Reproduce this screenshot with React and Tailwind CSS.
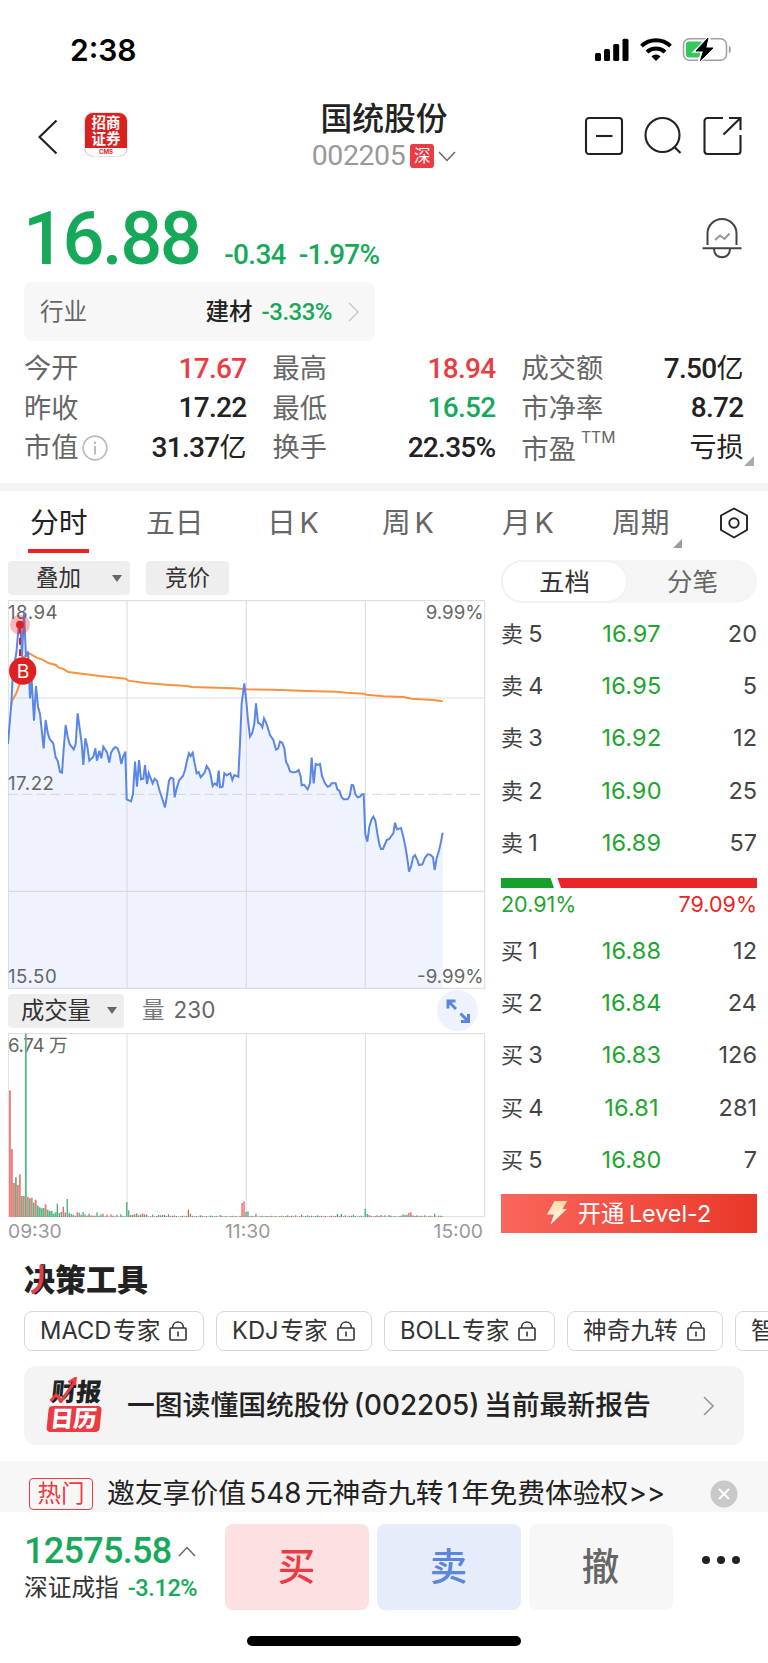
import React, { useState } from 'react';

const stats = [
  { label: '今开', value: '17.67', color: 'text-[#ee3a43]' },
  { label: '最高', value: '18.94', color: 'text-[#ee3a43]' },
  { label: '成交额', value: '7.50', unit: '亿', color: 'text-[#222]' },
  { label: '昨收', value: '17.22', color: 'text-[#222]' },
  { label: '最低', value: '16.52', color: 'text-[#17a95a]' },
  { label: '市净率', value: '8.72', color: 'text-[#222]' },
  { label: '市值', value: '31.37', unit: '亿', color: 'text-[#222]', info: true },
  { label: '换手', value: '22.35%', color: 'text-[#222]' },
  { label: '市盈', unit: '亏损', color: 'text-[#222]', ttm: true },
];

const tabs = [
  { name: '分时', width: 'w-[116px]' },
  { name: '五日', width: 'w-[121px]' },
  { name: '日 K', width: 'w-[115px]' },
  { name: '周 K', width: 'w-[120px]' },
  { name: '月 K', width: 'w-[110px]' },
  { name: '周期', width: 'w-[108px]', corner: true },
];

const sells = [
  ['卖 5', '16.97', '20'],
  ['卖 4', '16.95', '5'],
  ['卖 3', '16.92', '12'],
  ['卖 2', '16.90', '25'],
  ['卖 1', '16.89', '57'],
];

const buys = [
  ['买 1', '16.88', '12'],
  ['买 2', '16.84', '24'],
  ['买 3', '16.83', '126'],
  ['买 4', '16.81', '281'],
  ['买 5', '16.80', '7'],
];

const tools = [
  { name: 'MACD 专家', width: 'w-[180px]' },
  { name: 'KDJ 专家', width: 'w-[156px]' },
  { name: 'BOLL 专家', width: 'w-[171px]' },
  { name: '神奇九转', width: 'w-[156px]' },
  { name: '智能', width: 'w-[156px]' },
];

const pricePoints =
  '24,762 34,640 38,560 50,480 54,430 58,400 62,420 66,500 72,368 78,500 84,485 90,625 95,570 102,692 108,588 114,650 120,672 131,775 137,690 143,728 149,747 160,760 167,802 173,812 180,846 186,848 191,778 197,705 203,740 209,762 221,778 227,762 233,670 239,715 245,760 250,825 256,745 262,770 268,812 280,800 286,775 291,812 298,782 304,805 310,770 321,787 328,818 333,788 340,777 346,771 353,775 358,790 364,822 370,798 376,785 380,928 393,934 399,912 405,815 411,890 417,810 423,868 430,866 435,825 441,882 446,850 458,880 464,866 471,873 478,900 488,930 495,952 501,915 507,872 512,863 520,866 524,922 530,895 538,870 549,858 555,840 561,812 567,790 572,798 578,788 584,820 590,850 596,846 602,862 608,855 614,847 620,828 627,838 632,855 638,888 644,880 651,886 656,842 660,892 668,890 673,850 680,856 691,850 697,870 703,855 715,860 720,760 725,640 733,580 739,635 744,690 750,740 757,728 763,700 768,640 774,698 782,703 787,712 792,685 798,697 804,715 810,735 820,750 828,779 834,776 840,755 847,758 853,775 858,815 864,826 870,844 878,847 888,846 896,840 902,860 905,886 912,884 923,898 930,880 935,803 941,880 947,822 953,825 960,822 966,858 975,880 983,890 990,887 995,880 1007,880 1012,898 1018,902 1024,920 1031,928 1043,928 1049,918 1055,885 1060,886 1066,912 1073,922 1080,920 1086,913 1091,913 1096,1033 1102,1055 1108,1010 1114,990 1120,980 1126,992 1132,1030 1138,1063 1143,1077 1149,1077 1160,1050 1168,1047 1174,1038 1180,1030 1185,998 1191,1018 1203,1014 1210,1040 1218,1080 1224,1120 1227,1145 1233,1130 1239,1102 1245,1095 1252,1110 1257,1125 1267,1123 1275,1103 1283,1093 1291,1094 1299,1102 1304,1140 1310,1105 1318,1078 1323,1055 1328,1028';

const averagePoints =
  '32,655 36,632 48,612 56,590 60,575 72,500 88,490 110,503 128,509 145,519 168,525 175,532 190,537 205,546 245,551 300,558 350,563 377,566 385,572 435,579 500,584 560,588 575,591 700,595 740,598 820,599 920,603 1010,605 1040,608 1092,611 1100,614 1150,619 1210,621 1235,626 1300,630 1328,634';

// 每分钟成交量高度，正数为红，负数为绿
const openVolumes = [
  380, 204, 102, -119, 96, 128, -63, 63, -550, 60, -56, 58, -43, 52, -34, -29, -26, -27, 38, -22, -18, -18, -10,
  -14, -40, -12, -15, 31, 14, -54, -13, -9, -7, 4, 14, -13, -7, -15, 8, -4, -10, 5, 4, 4, -14, -4, -8, 10,
];

const volumeSpikes = {
  49: 7, 51: 8, 54: 6, 56: -8, 59: -45, 60: -20, 61: 6, 62: -7, 63: 8, 64: -11, 65: -5, 66: 8, 67: 10, 68: 8, 69: -7,
  72: -7, 75: -6, 76: -5, 77: -6, 78: 7, 80: 8, 83: 5, 90: 22, 91: -10, 96: -5, 101: -4, 106: -6, 117: 42, 118: 47,
  119: -15, 120: -17, 124: 10, 130: -3, 140: -5, 144: 5, 147: -7, 150: -5, 155: -5, 165: -9, 167: -9, 169: 5, 173: -6,
  179: -25, 180: -9, 181: 6, 185: -5, 187: -6, 189: 5, 191: -6, 198: -8, 199: -6, 200: -7, 201: 12, 202: 14, 203: -5,
  205: -5, 209: 5, 214: -10, 216: 4,
};

const volumes = Array.from({ length: 219 }, (_, i) => {
  if (i < openVolumes.length) return openVolumes[i];
  if (volumeSpikes[i]) return volumeSpikes[i];
  const size = 1 + ((i * 7) % 5) * 0.7;
  return (i * 5) % 9 < 5 ? size : -size;
});

const Chevron = ({ className, d = 'M1 1l9 9-9 9', box = '0 0 11 20', width = 1.6 }) => (
  <svg className={className} viewBox={box} fill="none" stroke="currentColor" strokeWidth={width}>
    <path d={d} />
  </svg>
);

const StatusBar = () => (
  <div className="flex h-[99px] items-center justify-between pl-[70px] pr-9">
    <span className="text-[30px] leading-none font-semibold text-black">2:38</span>
    <svg className="h-[26px] w-[138px]" viewBox="0 0 138 26">
      <rect x="1" y="16" width="6" height="8" rx="1.5" />
      <rect x="10" y="12" width="6" height="12" rx="1.5" />
      <rect x="19.2" y="7" width="6" height="17" rx="1.5" />
      <rect x="28.5" y="1.7" width="6" height="22.3" rx="1.5" />
      <g fill="none" stroke="#000" strokeWidth="4">
        <path d="M47.5 9a21 21 0 0 1 29 0" />
        <path d="M53 15a13 13 0 0 1 18 0" />
      </g>
      <path d="M62 24l-4.5-4.6a6.5 6.5 0 0 1 9 0z" />
      <rect x="89.5" y="1.8" width="43" height="21.5" rx="6" fill="none" stroke="#a0a0a4" strokeWidth="1.5" />
      <path d="M134.8 8.7c2.7.8 2.7 6.8 0 7.6z" fill="#a0a0a4" />
      <rect x="92" y="4.500" width="17" height="16" rx="3" fill="#34c759" />
      <path d="M115.500-.5l-15 15h7.500l-3 10.500L121 10.500h-7.500z" stroke="#fff" strokeWidth="2.500" />
      <path d="M114 1l-12 13h7.500l-3 9.500L119 11h-7.500z" stroke="#000" strokeWidth="1" strokeLinejoin="round" />
    </svg>
  </div>
);

const Header = () => (
  <div className="flex h-[92px] items-start">
    <div className="flex w-[230px] items-center pl-[38px] pt-[13px]">
      <Chevron className="mt-1 h-[36px] w-[20px] text-[#222]" box="0 0 20 36" d="M18.500 1.500L1.500 18l17 16.500" width={2.2} />
      <div className="ml-[26px] flex h-[45px] w-[44px] flex-col items-center overflow-hidden rounded-[9px] border border-[#e5e5e5] bg-[#d9221f] font-bold">
        <div className="h-[35px] shrink-0 pt-[2px] text-[14.500px] leading-[15.500px] text-white">
          招商
          <br />
          证券
        </div>
        <div className="w-full flex-1 bg-white text-center text-[6px] leading-[8px] text-[#d9221f]">CMS</div>
      </div>
    </div>
    <div className="flex w-[308px] flex-col items-center">
      <div className="mt-1 text-[31.800px] leading-[32px] font-medium text-[#222]">国统股份</div>
      <div className="mt-[6px] flex items-center">
        <span className="font-[Roboto] text-[28.500px] leading-[30px] tracking-[-0.400px] text-[#999]">002205</span>
        <span className="ml-[5px] flex h-6 w-6 items-center justify-center rounded-[3px] bg-[#ee3a43] text-[16.500px] leading-none text-white">
          深
        </span>
        <Chevron className="ml-[4px] h-[11px] w-[18px] text-[#666]" box="0 0 18 11" d="M1 1l8 8.500L17 1" width={1.500} />
      </div>
    </div>
    <svg className="ml-[46px] mt-[17px] h-[40px] w-[160px]" viewBox="0 0 160 40" fill="none" stroke="#222" strokeWidth="2.1">
      <rect x="2" y="2" width="36" height="36" rx="3" />
      <path d="M12 20h16.500" />
      <circle cx="78.500" cy="19" r="17" />
      <path d="M90 30.500l6.500 6.500" />
      <path d="M139 2h-15.500a3 3 0 0 0-3 3v30a3 3 0 0 0 3 3h30a3 3 0 0 0 3-3V19M145 2h11.500v12M156.500 2l-17 16.500" />
    </svg>
  </div>
);

const Quote = () => (
  <div className="flex h-[91px] items-start justify-between pl-[23px] pr-[26px] font-[Roboto] font-medium text-[#17a95a]">
    <div className="flex items-baseline pt-[1.500px]">
      <span className="text-[74px] leading-[92px] tracking-[-2.500px]">16.88</span>
      <span className="ml-[25px] text-[28px] tracking-[-0.700px]">-0.34</span>
      <span className="ml-[13px] text-[28px] tracking-[-0.900px]">-1.97%</span>
    </div>
    <svg className="mt-[27px] h-[41px] w-[40px]" viewBox="0 0 40 41" fill="none" stroke="#444" strokeWidth="2">
      <path d="M5.500 27V15.500a14.500 14.500 0 0 1 29 0V27M0.500 30.300h39M12 31c0 11 16 11 16 0" />
      <path d="M13 22l5-4.500 4.500 3.500 5-5.500" stroke="#999" />
    </svg>
  </div>
);

const Industry = () => (
  <div className="ml-6 flex h-[59px] w-[351px] items-center rounded-lg bg-[#f7f7f7] px-4 text-[23.500px] leading-none">
    <span className="text-[#666]">行业</span>
    <span className="ml-auto font-medium text-[#222]">建材</span>
    <span className="ml-[9px] font-[Roboto] text-[24px] font-medium tracking-[-0.500px] text-[#17a95a]">-3.33%</span>
    <Chevron className="ml-[16px] h-[20px] w-[11px] text-[#ccc]" />
  </div>
);

const Stats = () => (
  <div className="relative mt-[8px] grid h-[134px] auto-rows-[39.500px] grid-cols-[222.500px_223px_222px] gap-x-[26px] pl-6">
    {stats.map((item) => (
      <div key={item.label} className="flex items-center justify-between">
        <span className={`flex items-center text-[27.200px] leading-none text-[#666] ${item.ttm ? 'pt-[3px]' : ''}`}>
          {item.label}
          {item.info && (
            <svg className="ml-[4px] h-[26px] w-[26px]" viewBox="0 0 26 26" fill="none" stroke="#bbb" strokeWidth="1.700">
              <circle cx="13" cy="13" r="11.800" />
              <path d="M13 11v8.500M13 6.500v2.500" strokeWidth="2" />
            </svg>
          )}
          {item.ttm && <span className="mb-[22px] ml-[5px] text-[15.800px] leading-none">TTM</span>}
        </span>
        <span className={`font-[Roboto,'Noto_Sans_CJK_SC'] text-[28px] leading-none font-medium tracking-[-0.700px] ${item.color}`}>
          {item.value}
          {item.unit && <span className="text-[27px] font-normal tracking-normal">{item.unit}</span>}
        </span>
      </div>
    ))}
    <div className="absolute right-[14px] bottom-[17px] border-b-[10px] border-l-[10px] border-b-[#aaa] border-l-transparent"></div>
  </div>
);

const Tabs = ({ active, onChange }) => (
  <div className="flex h-[77px] items-start border-t-8 border-[#f4f4f4] pl-[30px]">
    {tabs.map((tab) => (
      <button
        key={tab.name}
        onClick={() => onChange(tab.name)}
        className={`relative flex h-[62px] items-center pt-[2px] text-[28.800px] leading-none [word-spacing:-4.500px] ${tab.width} ${
          tab.name === active ? 'text-[#222]' : 'text-[#666]'
        }`}
      >
        {tab.name}
        {tab.name === active && <span className="absolute bottom-0 -left-[2px] h-[4px] w-[61px] bg-[#ee2124]"></span>}
        {tab.corner && (
          <span className="absolute bottom-[5px] left-[61px] border-b-[9px] border-l-[9px] border-b-[#999ca3] border-l-transparent"></span>
        )}
      </button>
    ))}
    <svg className="mt-[16px] h-[32px] w-[28px]" viewBox="0 0 28 32" fill="none" stroke="#222" strokeWidth="1.900">
      <path d="M14 1.500L27 8.500v14.500L14 30.500 1 23V8.500z" strokeLinejoin="round" />
      <circle cx="14" cy="16" r="4.700" />
    </svg>
  </div>
);

const Caret = ({ className }) => (
  <span className={`border-x-[5px] border-t-[7px] border-x-transparent border-t-[#666] ${className}`}></span>
);

const PriceChart = () => (
  <svg className="mt-[5px] block h-[390px] w-[478px]" viewBox="24 330 1434 1170" fontFamily="Inter" fontSize="56" fill="#666">
    <polygon points={`24,1495 ${pricePoints} 1328,1495`} fill="#eef3fe" />
    <g fill="none" stroke="#d0d3da" strokeOpacity=".75" strokeWidth="3.500">
      <path d="M25 332H1454V1495H25zM381 332V1495M739 332V1495M1096 332V1495M25 624H1454M25 1204H1454" />
      <path d="M25 913H1454" strokeDasharray="30 12" />
    </g>
    <text x="24" y="387" textLength="149">18.94</text>
    <text x="24" y="900" textLength="138">17.22</text>
    <text x="24" y="1478" textLength="146">15.50</text>
    <text x="1451" y="387" textAnchor="end" textLength="174">9.99%</text>
    <text x="1451" y="1478" textAnchor="end" textLength="200">-9.99%</text>
    <polyline points={averagePoints} fill="none" stroke="#f7933f" strokeWidth="6" />
    <polyline points={pricePoints} fill="none" stroke="#5b86e5" strokeWidth="6" />
    <circle cx="60" cy="404" r="30" fill="#ee2124" fillOpacity=".32" />
    <path d="M60 410V510" stroke="#e02020" strokeWidth="6" strokeDasharray="20 14" />
    <circle cx="60" cy="404" r="12" fill="#e02020" />
    <circle cx="68" cy="543" r="41" fill="#e02020" />
    <text x="69" y="564" textAnchor="middle" fill="#fff" fontSize="58">B</text>
  </svg>
);

const VolumeChart = () => (
  <svg className="mt-[5px] block h-[185px] w-[478px]" viewBox="24 699 1434 555" fontFamily="Inter, 'Noto Sans CJK SC'" fontSize="56" fill="#666">
    <path
      d="M25 701H1454V1250H25zM381 701V1250M739 701V1250M1096 701V1250"
      fill="none"
      stroke="#dcdcdc"
      strokeWidth="3"
    />
    <text x="24" y="757" textLength="179">6.74 万</text>
    {volumes.map((v, i) => (
      <rect
        key={i}
        x={27 + i * 5.96}
        y={1251 - Math.abs(v)}
        width={i < 24 ? 5.5 : 3.6}
        height={Math.abs(v)}
        fill={v > 0 ? (i < 24 ? '#ee7b79' : '#e8504f') : i < 24 ? '#56b983' : '#2fa765'}
      />
    ))}
  </svg>
);

const Book = ({ rows }) => (
  <div>
    {rows.map(([label, price, count]) => (
      <div key={label} className="grid h-[52.300px] grid-cols-3 items-center text-[23.500px] leading-none text-[#444]">
        <span className="text-[22px] [word-spacing:-1px]">
          {label.slice(0, 2)}
          <span className="text-[23.500px]">{label.slice(2)}</span>
        </span>
        <span className="pl-[5px] text-center tracking-[0.200px] text-[#1fa52f]">{price}</span>
        <span className="text-right">{count}</span>
      </div>
    ))}
  </div>
);

const Market = () => (
  <div className="flex h-[690px] items-start pl-2">
    <div className="w-[478px] pt-px">
      <div className="flex gap-4 text-[22.500px] leading-none text-[#333]">
        <button className="flex h-[34px] w-[122px] items-center rounded-[4px] bg-[#eeeeee] pl-[28px]">
          叠加
          <Caret className="ml-[31px]" />
        </button>
        <button className="h-[34px] w-[83px] rounded-[4px] bg-[#eeeeee]">竞价</button>
      </div>
      <PriceChart />
      <div className="mt-[3px] flex h-[35px] items-center text-[22.500px] leading-none">
        <button className="flex h-[34px] w-[116px] items-center rounded-[4px] bg-[#eeeeee] pl-[13px] text-[23.300px] text-[#333]">
          成交量
          <Caret className="ml-[16px]" />
        </button>
        <span className="ml-[18px] text-[#777]">量</span>
        <span className="ml-[9px] text-[#666]">230</span>
        <button className="-my-1 mr-[8px] ml-auto flex h-[41px] w-[41px] items-center justify-center rounded-full bg-[#edf2fc]">
          <svg className="h-6 w-6" viewBox="0 0 24 24" fill="none" stroke="#5b86dc" strokeWidth="3">
            <path d="M2 9.500V2h7.500M2 2l8 8M14.500 14.500l8 8M15 22.500h7.500V15" />
          </svg>
        </button>
      </div>
      <VolumeChart />
      <div className="mt-[3px] flex justify-between pr-[3px] text-[19.300px] leading-[20px] text-[#999]">
        <span>09:30</span>
        <span>11:30</span>
        <span>15:00</span>
      </div>
    </div>
    <div className="ml-[15px] w-[256px]">
      <div className="flex h-[43px] items-center rounded-full bg-[#f5f5f5] text-[25.500px] leading-none">
        <button className="h-[43px] w-[127px] rounded-full border-2 border-[#f2f2f2] bg-white text-[#333]">五档</button>
        <button className="flex-1 text-[#666]">分笔</button>
      </div>
      <div className="mt-[4.500px]">
        <Book rows={sells} />
      </div>
      <svg className="mt-[9px] h-[10px] w-[256px]" viewBox="0 0 256 10">
        <path d="M0 0h49.500l3.500 10H0z" fill="#17a02b" />
        <path d="M56.500 0H256v10H60z" fill="#e92525" />
      </svg>
      <div className="mt-[7px] flex h-[20px] items-center justify-between text-[21.500px] leading-none">
        <span className="text-[#1fa52f]">20.91%</span>
        <span className="text-[#e92525]">79.09%</span>
      </div>
      <div className="mt-[9.500px]">
        <Book rows={buys} />
      </div>
      <button className="mt-[8px] flex h-[39px] w-[256px] items-center justify-center bg-gradient-to-r from-[#fa665c] to-[#e83728] text-[23.300px] leading-none text-white [word-spacing:-2px]">
        <svg className="mr-[10px] h-[24px] w-[21px]" viewBox="0 0 21 24">
          <defs>
            <linearGradient id="bolt" x1="0" y1="0" x2="0" y2="1">
              <stop offset="0" stopColor="#fdd9a0" />
              <stop offset="1" stopColor="#fff" />
            </linearGradient>
          </defs>
          <path d="M7.500 0H20l-4.500 8H20L3.500 23.500 7 13.500H0z" fill="url(#bolt)" />
        </svg>
        开通 Level-2
      </button>
    </div>
  </div>
);

const LockIcon = () => (
  <svg className="ml-[9px] h-[20px] w-[18px] shrink-0" viewBox="0 0 18 20" fill="none" stroke="#333" strokeWidth="1.600">
    <rect x="1" y="7" width="16" height="12" rx="1" />
    <path d="M3.500 7c0-8 11-8 11 0M9 10.500v5" />
  </svg>
);

const DecisionTools = () => (
  <div className="h-[116px] overflow-hidden pl-6">
    <div className="relative mt-[12px] flex h-[35px] items-center text-[31px] leading-none font-black text-[#222]">
      决策工具
      <svg className="absolute top-[3px] left-[6px] h-[29px] w-[14px]" viewBox="0 0 14 29" fill="none">
        <path d="M11.500 0v11c0 9-4 14.500-10 16.500" stroke="#ee3a43" strokeWidth="4" />
      </svg>
    </div>
    <div className="mt-[14px] flex gap-3">
      {tools.map((tool) => (
        <button
          key={tool.name}
          className={`flex h-[40px] shrink-0 items-center rounded-[8px] border border-[#d8d8d8] pl-[15px] text-[23.700px] leading-none [word-spacing:-5px] whitespace-nowrap text-[#333] ${tool.width}`}
        >
          {tool.name}
          <LockIcon />
        </button>
      ))}
    </div>
  </div>
);

const Report = () => (
  <div className="mx-6 flex h-[79px] items-center rounded-xl bg-[#f4f4f4] pl-6 pr-[30px]">
    <div className="relative flex w-[54px] -skew-x-6 flex-col items-center leading-none font-black text-[#222]">
      <span className="h-[27px] text-[25px] leading-[26px]">财报</span>
      <span className="h-[26px] w-[53px] rounded-[4px] bg-[#ee3a43] text-center text-[23px] leading-[26px] text-white">日历</span>
      <svg className="absolute -top-[2px] left-[1px] h-[26px] w-[28px]" viewBox="0 0 28 26" fill="none" stroke="#ee3a43" strokeWidth="3">
        <path d="M1 24l5-6 6 6L23 5M17 5.500l6.500-4V8" />
      </svg>
    </div>
    <span className="ml-[25px] text-[27.800px] leading-none font-medium [word-spacing:-3px] whitespace-nowrap text-[#222]">
      一图读懂国统股份 (002205) 当前最新报告
    </span>
    <Chevron className="ml-auto h-[20px] w-[11px] text-[#999]" />
  </div>
);

const HotBar = () => (
  <div className="mt-4 flex h-[51px] items-center bg-[#f7f7f7] pt-[15px] pl-[29px]">
    <span className="flex h-[32px] w-[64px] items-center justify-center rounded-[4px] border border-[#ee3a43] text-[23.500px] leading-none text-[#ee3a43]">
      热门
    </span>
    <span className="ml-[14px] text-[27.800px] leading-none [word-spacing:-4.500px] whitespace-nowrap text-[#222]">
      邀友享价值 548 元神奇九转 1 年免费体验权&gt;&gt;
    </span>
    <svg className="mr-[30px] ml-auto h-[28px] w-[28px]" viewBox="0 0 28 28" stroke="#fff" strokeWidth="2">
      <circle cx="14" cy="14" r="13.500" fill="#c9c9c9" stroke="none" />
      <path d="M9 9l10 10M19 9L9 19" />
    </svg>
  </div>
);

const BottomBar = () => (
  <div className="flex h-[124px] items-start pt-3">
    <div className="w-[224.500px] pl-6">
      <div className="mt-[8px] flex items-center font-[Roboto] text-[36px] leading-[38px] font-medium tracking-[-0.700px] text-[#17a95a]">
        12575.58
        <Chevron className="ml-[6px] h-[11px] w-[18px] text-[#666]" box="0 0 18 11" d="M1 10l8-8.500L17 10" width={1.500} />
      </div>
      <div className="mt-[5px] flex items-center text-[23.700px] leading-[26px] text-[#333]">
        深证成指
        <span className="ml-[9px] font-[Roboto] text-[23.500px] font-medium tracking-[-0.400px] text-[#17a95a]">-3.12%</span>
      </div>
    </div>
    <div className="flex gap-2 text-[37.500px] leading-none font-medium">
      <button className="h-[86px] w-[144px] rounded-lg bg-[#fce0e2] text-[#ee3a43]">买</button>
      <button className="h-[86px] w-[144px] rounded-lg bg-[#e6ecf9] text-[#5b86dc]">卖</button>
      <button className="h-[86px] w-[144px] rounded-lg bg-[#f7f7f7] text-[#666]">撤</button>
    </div>
    <div className="mt-[32px] ml-[29px] flex gap-[7px]">
      <span className="h-2 w-2 rounded-full bg-[#222]"></span>
      <span className="h-2 w-2 rounded-full bg-[#222]"></span>
      <span className="h-2 w-2 rounded-full bg-[#222]"></span>
    </div>
  </div>
);

export default function App() {
  const [tab, setTab] = useState('分时');

  return (
    <div className="h-[1663px] w-[768px] overflow-hidden bg-white font-[Inter,'Noto_Sans_CJK_SC',sans-serif]">
      <StatusBar />
      <Header />
      <Quote />
      <Industry />
      <Stats />
      <Tabs active={tab} onChange={setTab} />
      <Market />
      <DecisionTools />
      <Report />
      <HotBar />
      <BottomBar />
      <div className="mx-auto h-[10px] w-[274px] rounded-full bg-black"></div>
    </div>
  );
}
